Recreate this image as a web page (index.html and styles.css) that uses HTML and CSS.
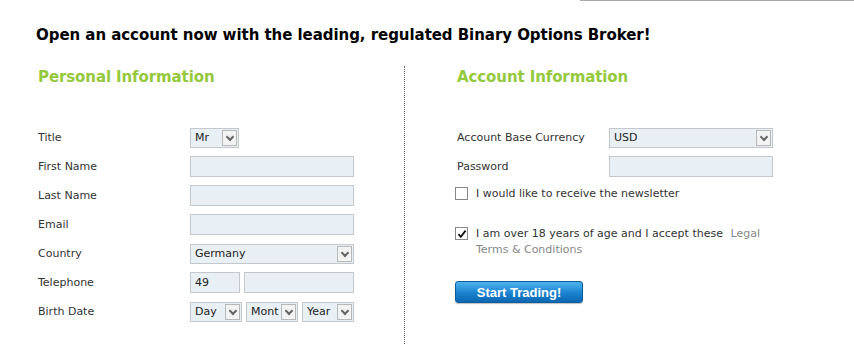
FILE: index.html
```html
<!DOCTYPE html>
<html lang="en">
<head>
  <meta charset="UTF-8" />
  <title>Open an account</title>
  <link rel="stylesheet" href="styles.css">
</head>
<body>
  <div class="topline"></div>
  <div class="page">
    <h1>Open an account now with the leading, regulated Binary Options Broker!</h1>
    <div class="columns">
      <div class="col col-left">
        <h2>Personal Information</h2>
        <div class="rows">
          <div class="row">
            <label>Title</label>
            <div class="select w-title"><span>Mr</span><i class="arrow"></i></div>
          </div>
          <div class="row">
            <label>First Name</label>
            <div class="input w-full"></div>
          </div>
          <div class="row">
            <label>Last Name</label>
            <div class="input w-full"></div>
          </div>
          <div class="row">
            <label>Email</label>
            <div class="input w-full"></div>
          </div>
          <div class="row">
            <label>Country</label>
            <div class="select w-full"><span>Germany</span><i class="arrow"></i></div>
          </div>
          <div class="row">
            <label>Telephone</label>
            <div class="pair">
              <div class="input w-code"><span>49</span></div>
              <div class="input w-phone"></div>
            </div>
          </div>
          <div class="row">
            <label>Birth Date</label>
            <div class="pair">
              <div class="select w-day"><span>Day</span><i class="arrow"></i></div>
              <div class="select w-day"><span>Mont</span><i class="arrow"></i></div>
              <div class="select w-day"><span>Year</span><i class="arrow"></i></div>
            </div>
          </div>
        </div>
      </div>

      <div class="col col-right">
        <h2>Account Information</h2>
        <div class="rows">
          <div class="row">
            <label>Account Base Currency</label>
            <div class="select w-full"><span>USD</span><i class="arrow"></i></div>
          </div>
          <div class="row">
            <label>Password</label>
            <div class="input w-full"></div>
          </div>
        </div>
        <div class="check first">
          <span class="box"></span>
          <p>I would like to receive the newsletter</p>
        </div>
        <div class="check">
          <span class="box checked">
            <svg width="10" height="10" viewBox="0 0 10 10"><path d="M1.5 5.2 L3.8 7.8 L8.6 1.6" fill="none" stroke="#111" stroke-width="1.8"/></svg>
          </span>
          <div class="terms">
            <p>I am over 18 years of age and I accept these <a>Legal</a></p>
            <p><a class="second">Terms &amp; Conditions</a></p>
          </div>
        </div>
        <button type="button" class="btn">Start Trading!</button>
      </div>
    </div>
  </div>
</body>
</html>
```

FILE: styles.css
```css
body {
  margin: 0;
  background: #fff;
  font-family: "DejaVu Sans", Verdana, sans-serif;
  color: #333;
}
.topline {
  height: 1px;
  margin-left: 580px;
  background: #aaa;
}
.page {
  padding: 0 0 0 36px;
}
h1 {
  margin: 0;
  padding-top: 25px;
  font-size: 15px;
  font-weight: bold;
  color: #000;
  letter-spacing: -0.05px;
}
h2 {
  margin: 0 0 0 2px;
  padding-top: 2px;
  font-size: 15px;
  font-weight: bold;
  color: #95c93d;
  letter-spacing: -0.1px;
}
.columns {
  display: flex;
  margin-top: 22px;
}
.col-left {
  width: 368px;
  border-right: 1px dotted #666;
  padding-bottom: 22px;
}
.col-right {
  padding-left: 50px;
}
.rows {
  display: flex;
  flex-direction: column;
  gap: 8px;
  margin-top: 41px;
  padding-left: 2px;
}
.row {
  display: flex;
  align-items: center;
  height: 21px;
}
label {
  width: 152px;
  font-size: 11px;
  color: #333;
}
.input, .select {
  box-sizing: border-box;
  height: 21px;
  border: 1px solid #c4c8cc;
  background: #e9f0f5;
  font-size: 11px;
  color: #222;
  display: flex;
  align-items: center;
}
.input span, .select span {
  padding-left: 4px;
  flex: 1;
  overflow: hidden;
  white-space: nowrap;
}
.select {
  height: 20px;
  padding-right: 1px;
}
.arrow {
  width: 15px;
  height: 16px;
  box-sizing: border-box;
  border: 1px solid #b8b8b8;
  background: #f3f3f3;
  position: relative;
}
.arrow::after {
  content: "";
  position: absolute;
  left: 4px;
  top: 3px;
  width: 4px;
  height: 4px;
  border-right: 2px solid #666;
  border-bottom: 2px solid #666;
  transform: rotate(45deg);
}
.w-full { width: 164px; }
.w-title { width: 49px; }
.w-code { width: 50px; }
.w-phone { width: 110px; }
.w-day { width: 52px; }
.pair {
  display: flex;
  gap: 4px;
}
.check {
  display: flex;
  align-items: flex-start;
  font-size: 11px;
}
.check.first {
  margin-top: 9px;
}
.check + .check {
  margin-top: 24px;
}
.check p {
  margin: 0;
  line-height: 16px;
}
.check a {
  color: #888;
  margin-left: 4px;
}
.check a.second {
  margin-left: 0;
}
.box {
  box-sizing: border-box;
  width: 13px;
  height: 13px;
  border: 1px solid #888;
  background: #fff;
  margin: 1px 8px 0 0;
  display: flex;
  align-items: center;
  justify-content: center;
  flex-shrink: 0;
}
.btn {
  margin-top: 23px;
  width: 128px;
  height: 22px;
  border: 1px solid #0d5d9c;
  border-radius: 3px;
  background: linear-gradient(#4cb3ee, #1a82cf 55%, #0e67b0);
  color: #fff;
  font-family: "Liberation Sans", Arial, sans-serif;
  font-size: 13px;
  font-weight: bold;
  padding: 0;
  box-shadow: 0 1px 1px rgba(0,0,0,0.25);
}
```
